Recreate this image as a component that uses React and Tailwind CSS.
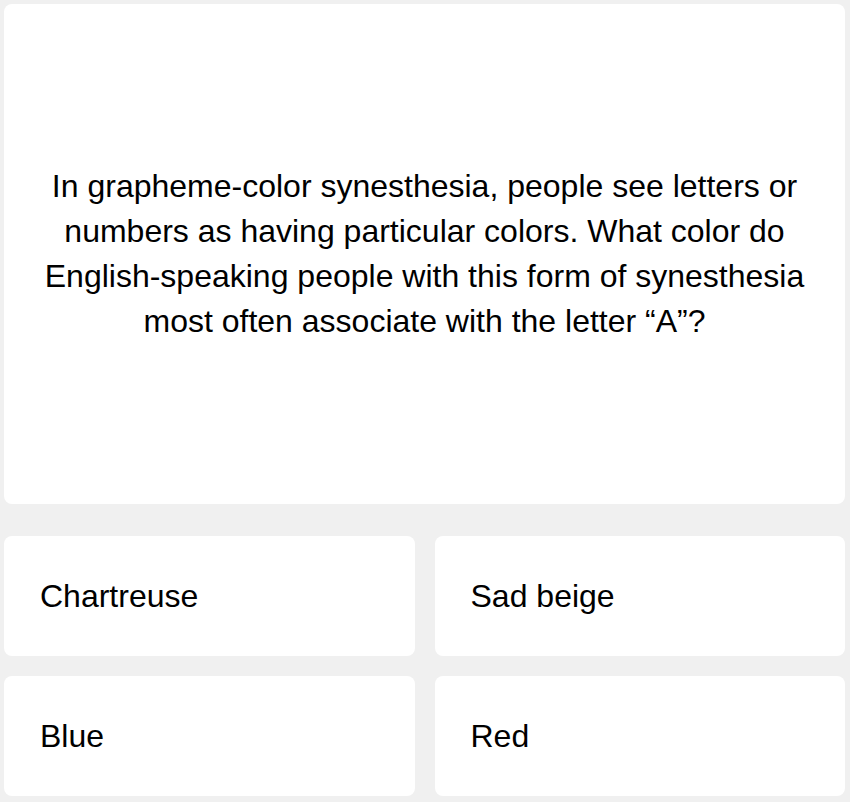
import React from 'react';

const answers = ['Chartreuse', 'Sad beige', 'Blue', 'Red'];

export default function App() {
  return (
    <div
      className="min-h-screen bg-[#f0f0f0] py-1 pl-1 pr-[5px] text-black"
      style={{ fontFamily: '"Liberation Sans", Arial, sans-serif' }}
    >
      {/* Question card */}
      <div className="flex h-[500px] items-center justify-center rounded-lg bg-white px-9 text-center">
        <p className="text-[32px] leading-[45px]">
          In grapheme-color synesthesia, people see letters or numbers as having particular colors. What color do
          English-speaking people with this form of synesthesia most often associate with the letter “A”?
        </p>
      </div>

      {/* Answers */}
      <div className="mt-8 grid grid-cols-2 gap-5">
        {answers.map((a) => (
          <button
            key={a}
            className="flex h-[120px] items-center rounded-lg bg-white px-9 text-left text-[32px]"
          >
            {a}
          </button>
        ))}
      </div>
    </div>
  );
}
